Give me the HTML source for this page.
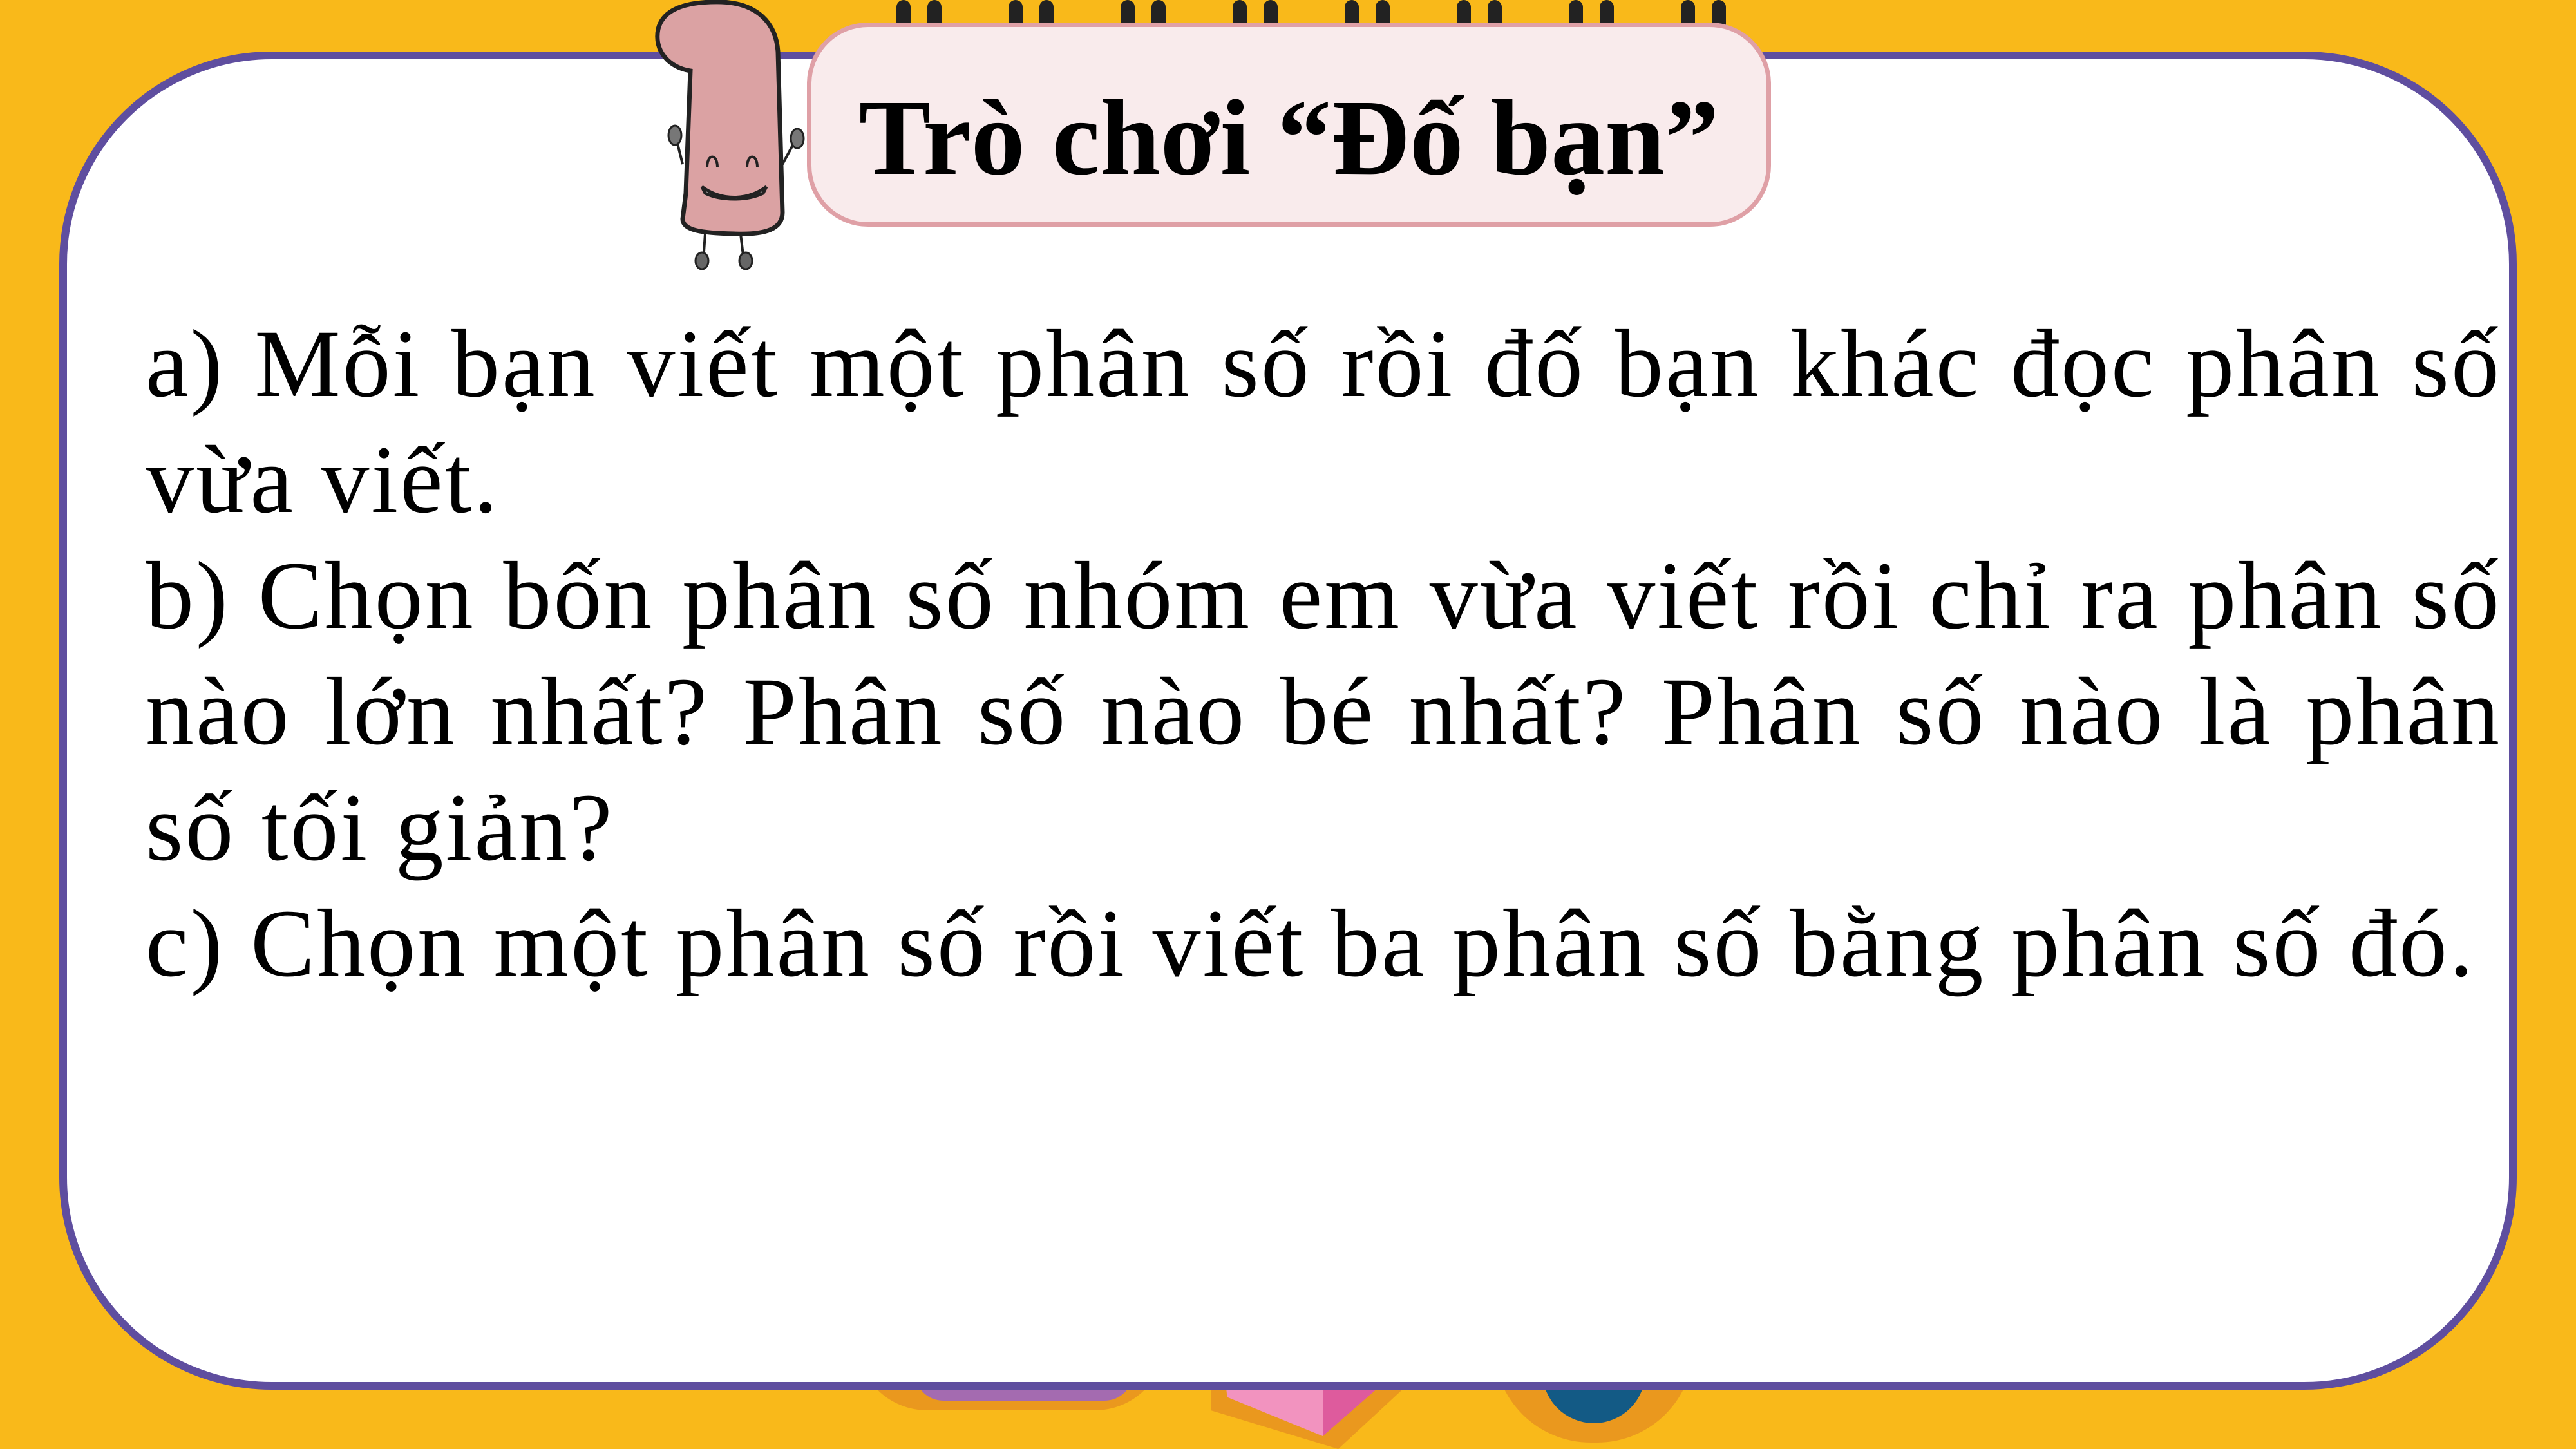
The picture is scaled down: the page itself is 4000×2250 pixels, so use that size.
<!DOCTYPE html>
<html><head><meta charset="utf-8"><style>
html,body{margin:0;padding:0}
body{width:4000px;height:2250px;background:#F9B91A;position:relative;overflow:hidden;font-family:"Liberation Serif",serif}
.card{position:absolute;left:92px;top:80px;width:3816px;height:2078px;box-sizing:border-box;border:12px solid #5F4E9F;border-radius:330px;background:#fff}
.pin{position:absolute;top:0;width:22px;height:60px;background:#222;border-radius:11px 11px 0 0}
.title{position:absolute;left:1253px;top:35px;width:1497px;height:317px;box-sizing:border-box;background:#F9EBEC;border:7px solid #DFA0A6;border-radius:95px}
.title span{position:absolute;left:0;right:0;top:88px;text-align:center;font-weight:bold;font-size:168px;line-height:1;color:#000}
.txt{position:absolute;left:226px;width:3658px;top:475px;font-size:150px;line-height:180px;color:#000;letter-spacing:3px}
.j{text-align:justify;text-align-last:justify;white-space:nowrap}
.blob{position:absolute;border-radius:50%}
</style></head><body>
<div class="blob" style="left:1330px;top:2080px;width:480px;height:110px;background:#EA981E;border-radius:0 0 240px 240px"></div>
<div class="blob" style="left:1420px;top:2130px;width:340px;height:45px;background:#A46BB0;border-radius:0 0 60px 60px"></div>
<div style="position:absolute;left:1880px;top:2100px;width:360px;height:150px;background:#EA981E;clip-path:polygon(0 0,100% 0,55% 100%,0 60%)"></div>
<div style="position:absolute;left:1900px;top:2120px;width:280px;height:110px;clip-path:polygon(0 0,100% 0,55% 100%,2% 45%);background:linear-gradient(90deg,#F293BF 55%,#DE5B9D 55%)"></div>
<div class="blob" style="left:2320px;top:2070px;width:310px;height:170px;background:#EA981E;border-radius:0 0 150px 150px"></div>
<div class="blob" style="left:2395px;top:2110px;width:160px;height:100px;background:#135A85;border-radius:0 0 80px 80px"></div>
<div class="card"></div>
<div class="pin" style="left:1392px"></div><div class="pin" style="left:1440px"></div>
<div class="pin" style="left:1566px"></div><div class="pin" style="left:1614px"></div>
<div class="pin" style="left:1740px"></div><div class="pin" style="left:1788px"></div>
<div class="pin" style="left:1914px"></div><div class="pin" style="left:1962px"></div>
<div class="pin" style="left:2088px"></div><div class="pin" style="left:2136px"></div>
<div class="pin" style="left:2262px"></div><div class="pin" style="left:2310px"></div>
<div class="pin" style="left:2436px"></div><div class="pin" style="left:2484px"></div>
<div class="pin" style="left:2610px"></div><div class="pin" style="left:2658px"></div>
<svg style="position:absolute;left:1010px;top:0" width="260" height="420" viewBox="0 0 260 420">
<path d="M50 340 L55 300 L62 110 C30 105 5 80 12 45 C20 12 60 2 110 3 C165 5 195 35 198 80 L205 330 C205 355 180 365 130 363 C80 362 50 358 50 340Z" fill="#DBA2A3" stroke="#222" stroke-width="7"/>
<path d="M85 363 L82 405 M140 363 L145 405" stroke="#222" stroke-width="4"/>
<ellipse cx="80" cy="405" rx="10" ry="13" fill="#666" stroke="#222" stroke-width="3"/>
<ellipse cx="148" cy="405" rx="10" ry="13" fill="#666" stroke="#222" stroke-width="3"/>
<path d="M50 255 L40 215 M205 255 L225 218" stroke="#222" stroke-width="4"/>
<ellipse cx="38" cy="210" rx="10" ry="15" fill="#777" stroke="#222" stroke-width="3"/>
<ellipse cx="228" cy="215" rx="10" ry="15" fill="#777" stroke="#222" stroke-width="3"/>
<path d="M88 260 C88 238 104 238 104 260 M150 260 C150 238 166 238 166 260" stroke="#222" stroke-width="4" fill="none"/>
<path d="M80 290 C110 312 150 312 180 290 L175 300 C150 312 110 312 85 300Z" stroke="#222" stroke-width="5" fill="#fff"/>
</svg>
<div class="title"><span>Trò chơi “Đố bạn”</span></div>
<div class="txt">
<div class="j">a) Mỗi bạn viết một phân số rồi đố bạn khác đọc phân số</div>
<div>vừa viết.</div>
<div class="j">b) Chọn bốn phân số nhóm em vừa viết rồi chỉ ra phân số</div>
<div class="j">nào lớn nhất? Phân số nào bé nhất? Phân số nào là phân</div>
<div>số tối giản?</div>
<div>c) Chọn một phân số rồi viết ba phân số bằng phân số đó.</div>
</div>
</body></html>
